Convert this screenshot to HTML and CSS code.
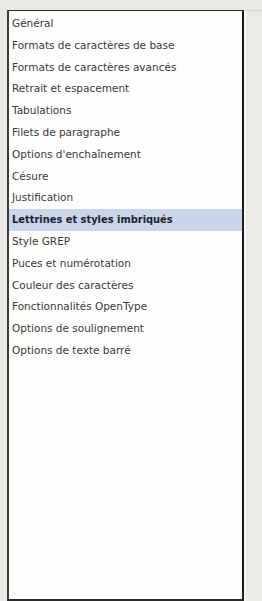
FILE: index.html
```html
<!DOCTYPE html>
<html lang="fr">
<head>
    <meta charset="UTF-8">
    <title>Options de style de caractère</title>
    <link rel="stylesheet" href="styles.css">
</head>
<body>
    <div class="window">
        <ul class="list">
            <li>Général</li>
            <li>Formats de caractères de base</li>
            <li>Formats de caractères avancés</li>
            <li>Retrait et espacement</li>
            <li>Tabulations</li>
            <li>Filets de paragraphe</li>
            <li>Options d'enchaînement</li>
            <li>Césure</li>
            <li>Justification</li>
            <li class="selected">Lettrines et styles imbriqués</li>
            <li>Style GREP</li>
            <li>Puces et numérotation</li>
            <li>Couleur des caractères</li>
            <li>Fonctionnalités OpenType</li>
            <li>Options de soulignement</li>
            <li>Options de texte barré</li>
        </ul>
        <div class="side"></div>
    </div>
</body>
</html>
```

FILE: styles.css
```css
html, body {
    margin: 0;
    padding: 0;
    background: #ebe9e6;
    height: 100%;
}

.window {
    display: flex;
    height: 601px;
    padding: 10px 0 0 7px;
    box-sizing: border-box;
}

.list {
    list-style: none;
    margin: 0;
    padding: 2px 0 0 0;
    width: 237px;
    height: 591px;
    box-sizing: border-box;
    background: #fdfdfc;
    border-top: 1px solid #2a2a2a;
    border-left: 2px solid #3c3c3c;
    border-right: 2px solid #1e1e1e;
    border-bottom: 2px solid #2a2a2a;
    font-family: "DejaVu Sans", sans-serif;
    font-size: 10.5px;
    color: #3a3a3a;
}

.list li {
    height: 21.8px;
    line-height: 21.8px;
    padding-left: 3px;
    white-space: nowrap;
}

.list li.selected {
    background: #c8d5ec;
    font-weight: bold;
    font-size: 9.9px;
    color: #222;
}

.side {
    flex: 1;
    border-top: 1px solid #d6d4d1;
    border-left: 2px solid #f6f5f4;
    background: #eceae7;
}
```
